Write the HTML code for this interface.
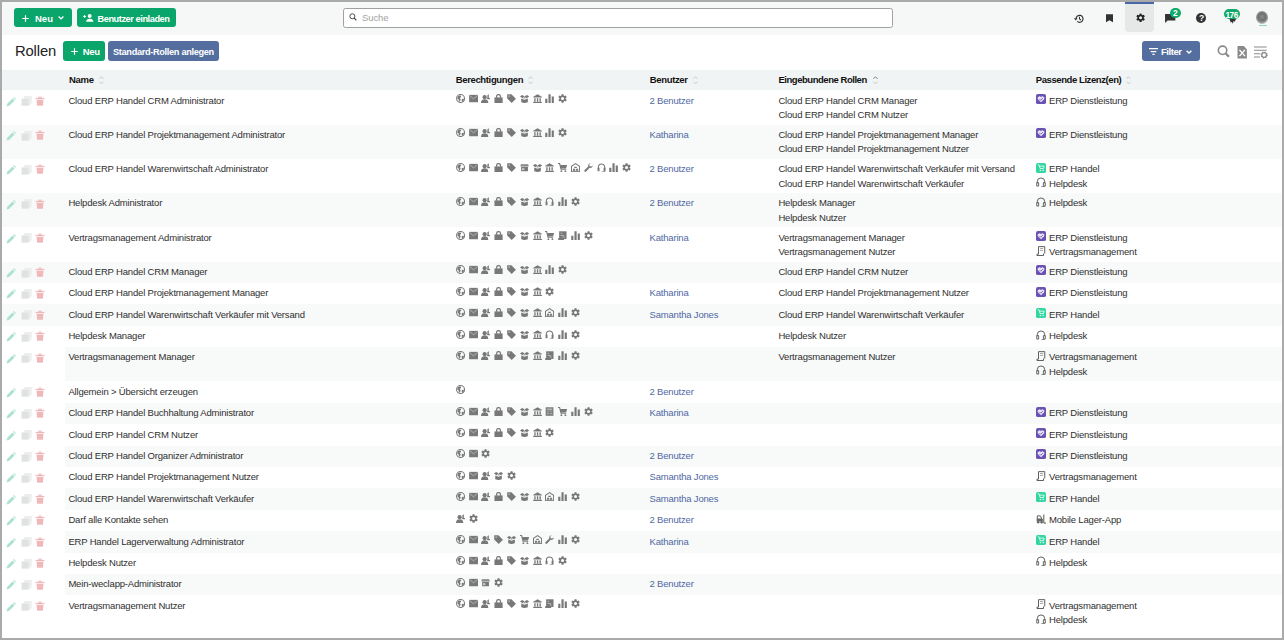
<!DOCTYPE html>
<html><head><meta charset="utf-8"><title>Rollen</title>
<style>
*{box-sizing:border-box;margin:0;padding:0}
html,body{width:1284px;height:640px;overflow:hidden;background:#fff;font-family:"Liberation Sans", sans-serif;}
#frame{position:absolute;left:0;top:0;width:1284px;height:640px;overflow:hidden;background:#fff}
#border{position:absolute;left:0;top:0;width:1284px;height:640px;border:2px solid #aaaaaa;pointer-events:none}
.abs{position:absolute}
.ic{position:absolute;display:block;overflow:visible}
.row{position:absolute;left:0;width:1284px}
.green{background:#0aa56a}
.blue{background:#546ea0}
</style></head><body>
<svg width="0" height="0" style="position:absolute"><defs><symbol id="i-globe" viewBox="0 0 16 16" fill="currentColor"><circle cx="8" cy="8" r="7" fill="none" stroke="currentColor" stroke-width="1.8"/><path d="M3.2 3.8L7.5 2.4 9.2 4.6 7 7 8.2 10 6.5 13.6 5 12.2 4.6 9.5 2.2 7.6z"/><path d="M10.2 8.8L14 8.4 13.4 11.8 10.8 14 10 11.2z"/></symbol><symbol id="i-mail" viewBox="0 0 16 16" fill="currentColor"><path d="M0.2 1.5h15.6v13H0.2z"/><path d="M0.8 2.5L8 8.5l7.2-6" fill="none" stroke="#fff" stroke-width="1.1" opacity=".7"/></symbol><symbol id="i-users" viewBox="0 0 16 16" fill="currentColor"><circle cx="6.4" cy="5.6" r="3.7"/><path d="M0 16c0-4.6 2.6-6.6 6.4-6.6s6.4 2 6.4 6.6z"/><path d="M11.2 2.2l2.6-1.8V9h-2.6z"/><path d="M11.2 7h4.6v2.2h-4.6z"/></symbol><symbol id="i-bag" viewBox="0 0 16 16" fill="currentColor"><path d="M0.8 6h14.4v10H0.8z"/><path d="M4.6 6.5V4.4a3.4 3.4 0 0 1 6.8 0v2.1" fill="none" stroke="currentColor" stroke-width="2.2"/></symbol><symbol id="i-tag" viewBox="0 0 16 16" fill="currentColor"><path d="M0.3 0.3h7.4l8 8-7.4 7.4-8-8z"/><circle cx="3.8" cy="3.8" r="1.4" fill="#fff" opacity=".5"/></symbol><symbol id="i-box" viewBox="0 0 16 16" fill="currentColor"><path d="M2.2 8l5.8 2.2L13.8 8v6.6L8 16l-5.8-1.4z"/><path d="M0 4.6L3.6 1.6 8 4 4.4 7.4z"/><path d="M16 4.6l-3.6-3L8 4l3.6 3.4z"/><path d="M8 4.5L5 7.2 8 8.4l3-1.2z" opacity=".6"/></symbol><symbol id="i-bank" viewBox="0 0 16 16" fill="currentColor"><path d="M0.5 4.8L8 0.3l7.5 4.5v1.5H0.5z"/><path d="M2.2 7.5h2.4v6H2.2zM6.8 7.5h2.4v6H6.8zM11.4 7.5h2.4v6h-2.4z"/><path d="M0.3 13.8h15.4V16H0.3z"/></symbol><symbol id="i-store" viewBox="0 0 16 16" fill="currentColor"><path d="M1.5 2h13l0.8 4.2H0.7z"/><path d="M1.2 4h13.6" stroke="#fff" stroke-width="0.7" opacity=".5"/><path d="M2 7h12v7.5H2z"/><path d="M3.5 9h4.2v3.6H3.5z" fill="#fff" opacity=".6"/></symbol><symbol id="i-cart" viewBox="0 0 16 16" fill="currentColor"><path d="M0 0.8h2.8l2.5 10.2h9" fill="none" stroke="currentColor" stroke-width="2"/><path d="M3.5 3.5h12.5l-1.8 6H5z"/><circle cx="6" cy="14.3" r="1.7"/><circle cx="13" cy="14.3" r="1.7"/></symbol><symbol id="i-warehouse" viewBox="0 0 16 16" fill="currentColor"><path d="M0.9 15.5V5.8L8 1.2l7.1 4.6v9.7z" fill="none" stroke="currentColor" stroke-width="1.8"/><path d="M5.8 6.5h4.4v2.2H5.8zM3.5 10h3.8v3.5H3.5zM8.7 10h3.8v3.5H8.7z"/><path d="M2.5 14.5h11" stroke="currentColor" stroke-width="1.2"/></symbol><symbol id="i-wrench" viewBox="0 0 16 16" fill="currentColor"><path d="M15.5 4.5a4.3 4.3 0 0 1-5.6 4L3.8 15a1.9 1.9 0 0 1-2.7-2.7L7.5 6.1A4.3 4.3 0 0 1 11.6 0.5L9.3 2.8l0.6 2.7 2.7 0.6z"/></symbol><symbol id="i-headset" viewBox="0 0 16 16" fill="currentColor"><path d="M2.4 10V7.4a5.6 5.6 0 0 1 11.2 0V10" fill="none" stroke="currentColor" stroke-width="1.9"/><path d="M1 8.5h3.4v6.2H1zM11.6 8.5H15v6.2h-3.4z"/><path d="M13.6 14v1.5H8.2" fill="none" stroke="currentColor" stroke-width="1.3"/></symbol><symbol id="i-chart" viewBox="0 0 16 16" fill="currentColor"><path d="M0.4 8.2h3.8V16H0.4zM6.1 0.5h3.8V16H6.1zM11.8 4.3h3.8V16h-3.8z"/></symbol><symbol id="i-gear" viewBox="0 0 16 16" fill="currentColor"><path fill-rule="evenodd" d="M6.08 2.74L6.25 0.40L9.75 0.40L9.92 2.74L11.60 3.71L13.70 2.68L15.46 5.72L13.51 7.03L13.51 8.97L15.46 10.28L13.70 13.32L11.60 12.29L9.92 13.26L9.75 15.60L6.25 15.60L6.08 13.26L4.40 12.29L2.30 13.32L0.54 10.28L2.49 8.97L2.49 7.03L0.54 5.72L2.30 2.68L4.40 3.71ZM5.3 8a2.7 2.7 0 1 0 5.4 0a2.7 2.7 0 1 0 -5.4 0Z"/></symbol><symbol id="i-calc" viewBox="0 0 16 16" fill="currentColor"><path d="M1.2 0.5h13.6v15H1.2z"/><path d="M3.2 2.6h9.6v3H3.2zM3.2 7.8h4.2v1.6H3.2zM8.6 7.8h4.2v1.6H8.6zM3.2 11.2h4.2v1.6H3.2zM8.6 11.2h4.2v1.6H8.6z" fill="#fff" opacity=".45"/></symbol><symbol id="i-doc" viewBox="0 0 16 16" fill="currentColor"><path d="M2 0.5h13v13.5H2z"/><path d="M0.3 12.5h10.5v3.3H0.3z"/><path d="M4.5 3h3v2h-3zM4.5 7h6v1.6h-6zM8 9.8h4v1.5H8z" fill="#fff" opacity=".45"/></symbol>
<symbol id="a-pen" viewBox="0 0 16 16"><path d="M1 15l1-4.2L10.5 2.3l3.2 3.2L5.2 14z" fill="#ace2cd"/><path d="M11.5 1.3l1.2-1.2 3.2 3.2-1.2 1.2z" fill="#ace2cd"/></symbol>
<symbol id="a-copy" viewBox="0 0 16 16"><path d="M4.5 1.5h11v10.5l-4 3.5V5h-7z" fill="#eceeee"/><path d="M0.8 5h10.5v10.5H0.8z" fill="#e0e2e2"/></symbol>
<symbol id="a-trash" viewBox="0 0 16 16"><path d="M1 3h14v2H1z" fill="#f0b8b8"/><path d="M5.5 1h5v2h-5z" fill="#f0b8b8"/><path d="M2.5 6h11l-0.8 9.5H3.3z" fill="#f0b8b8"/></symbol>
<symbol id="lic-dl" viewBox="0 0 16 16"><rect x="0" y="0" width="16" height="16" rx="3" fill="#6a52b3"/><path d="M8 13L3 8.2a2.6 2.6 0 0 1 5-3 2.6 2.6 0 0 1 5 3z" fill="#e8e4f6"/><path d="M5.5 8l2 2 3.5-3.5" fill="none" stroke="#6a52b3" stroke-width="1.3"/></symbol>
<symbol id="lic-handel" viewBox="0 0 16 16"><rect x="0" y="0" width="16" height="16" rx="3" fill="#33d6a2"/><path d="M3 3h2l1.5 6h5.5l1-4H5.5" fill="none" stroke="#e6fbf3" stroke-width="1.4"/><circle cx="7" cy="12" r="1.2" fill="#e6fbf3"/><circle cx="11.5" cy="12" r="1.2" fill="#e6fbf3"/></symbol>
<symbol id="lic-helpdesk" viewBox="0 0 16 16"><path d="M2 10V7.5a6 6 0 0 1 12 0V10" fill="none" stroke="#555" stroke-width="1.5"/><path d="M1.2 9h3v5.5h-3zM11.8 9h3v5.5h-3z" fill="none" stroke="#555" stroke-width="1.4"/><path d="M13.3 14.5v1H8.5" fill="none" stroke="#555" stroke-width="1.2"/></symbol>
<symbol id="lic-vm" viewBox="0 0 16 16"><path d="M4 1h10v11" fill="none" stroke="#555" stroke-width="1.5"/><path d="M4 1v12H1.5v2.2h10.5V12" fill="none" stroke="#555" stroke-width="1.5"/><path d="M6.5 4h5M6.5 7h5" stroke="#888" stroke-width="1.2"/></symbol>
<symbol id="lic-mobile" viewBox="0 0 16 16"><path d="M2 8V3h5l2.5 5z" fill="none" stroke="#555" stroke-width="1.5"/><path d="M1 8h10v4H1z" fill="#666"/><circle cx="3.5" cy="13" r="2" fill="#666"/><circle cx="9" cy="13" r="2" fill="#666"/><path d="M12.5 1v13.5H16" fill="none" stroke="#555" stroke-width="1.6"/></symbol>
</defs></svg>
<div id="frame">
<div class="abs" style="left:0;top:0;width:1284px;height:35px;background:#f6f7f7"></div><div class="abs green" style="left:14px;top:8px;width:58.3px;height:19px;border-radius:3px"></div><svg class="ic" style="left:22.2px;top:15.0px;width:7px;height:7px;" viewBox="0 0 14 14"><path d="M7 0.5v13M0.5 7h13" stroke="#fff" stroke-width="2.4"/></svg><div class="abs" style="left:35px;top:13.00px;font-size:9.5px;line-height:11.88px;font-weight:700;color:#ffffff;letter-spacing:0px;white-space:nowrap;">Neu</div><svg class="ic" style="left:58px;top:16px;width:6px;height:3.5px;" viewBox="0 0 12 7"><path d="M1.2 1.2l4.8 4.6 4.8-4.6" fill="none" stroke="#fff" stroke-width="2.8"/></svg><div class="abs green" style="left:76.5px;top:8px;width:99.7px;height:19px;border-radius:3px"></div><svg class="ic" style="left:82.5px;top:14.0px;width:11px;height:7.8px;" viewBox="0 0 22 16"><path d="M0 5h6M3 2v6" stroke="#fff" stroke-width="2"/><circle cx="13.5" cy="4" r="4" fill="#fff"/><path d="M6 16c0-5 3.5-6.5 7.5-6.5S21 11 21 16z" fill="#fff"/></svg><div class="abs" style="left:97.5px;top:14.00px;font-size:9.2px;line-height:11.5px;font-weight:700;color:#ffffff;letter-spacing:-0.42px;white-space:nowrap;">Benutzer einladen</div><div class="abs" style="left:343px;top:7.8px;width:550px;height:19.8px;border:1px solid #a0a0a0;border-radius:2.5px;background:#fff"></div><svg class="ic" style="left:349px;top:13.2px;width:8.2px;height:8px;" viewBox="0 0 16 16"><circle cx="6.5" cy="6.5" r="5" fill="none" stroke="#444" stroke-width="1.9"/><path d="M10.2 10.2l4.3 4.3" stroke="#444" stroke-width="2.3"/></svg><div class="abs" style="left:362px;top:12.00px;font-size:9.5px;line-height:11.88px;font-weight:400;color:#a2a2a2;letter-spacing:-0.1px;white-space:nowrap;">Suche</div><div class="abs" style="left:1125.4px;top:2px;width:29px;height:30px;background:#e6e8e8;border-radius:0 0 4px 4px;border-top:2px solid #4a68a8"></div><svg class="ic" style="left:1074px;top:13.6px;width:10.2px;height:9.6px;" viewBox="0 0 16 15"><path d="M3.2 7.5A5.5 5.5 0 1 1 5 11.6" fill="none" stroke="#333" stroke-width="1.8"/><path d="M0 6.5h5.6L2.8 10z" fill="#333"/><path d="M8.6 4.2v3.6l2.4 1.6" fill="none" stroke="#333" stroke-width="1.6"/></svg><svg class="ic" style="left:1106px;top:13.9px;width:7px;height:8.3px;" viewBox="0 0 14 16"><path d="M0 0h14v16l-7-4-7 4z" fill="#333"/></svg><svg class="ic" style="left:1135.5px;top:13.2px;width:9.2px;height:9.5px;" viewBox="0 0 16 16"><use href="#i-gear" style="color:#222"/></svg><svg class="ic" style="left:1165px;top:13.5px;width:10.4px;height:9px;" viewBox="0 0 16 14"><path d="M0 0h16v10H4l-4 4z" fill="#333"/></svg><div class="abs" style="left:1170.4px;top:7.7px;width:10.4px;height:10.4px;border-radius:50%;background:#11a86b"></div><div class="abs" style="left:1172.9px;top:8.00px;font-size:8.5px;line-height:10.62px;font-weight:700;color:#ffffff;letter-spacing:0px;white-space:nowrap;">2</div><div class="abs" style="left:1196px;top:12.7px;width:10.4px;height:10.4px;border-radius:50%;background:#333"></div><div class="abs" style="left:1198.9px;top:13.00px;font-size:8.6px;line-height:10.75px;font-weight:700;color:#ffffff;letter-spacing:0px;white-space:nowrap;">?</div><svg class="ic" style="left:1228.5px;top:18.5px;width:7.5px;height:4.8px;" viewBox="0 0 16 10"><path d="M1 0h14l-3 6-2-2-2 6-2-4-2 2z" fill="#333"/></svg><div class="abs" style="left:1223.6px;top:9px;width:16.8px;height:10.4px;border-radius:5.2px;background:#11a86b"></div><div class="abs" style="left:1225.5px;top:10.00px;font-size:8.3px;line-height:10.38px;font-weight:700;color:#ffffff;letter-spacing:-0.5px;white-space:nowrap;">176</div><div class="abs" style="left:1256.3px;top:10.9px;width:12.2px;height:13.5px;border-radius:50%;background:radial-gradient(circle at 50% 45%, #8c8c8c 0, #6f6f6f 40%, #9c9c9c 62%, #d9d9d9 85%, #f2f2f2 100%)"></div><div class="abs" style="left:1258.5px;top:24.5px;width:8px;height:1px;background:#8fd6b6;border-radius:1px"></div>
<div class="abs" style="left:15px;top:42.00px;font-size:14.8px;line-height:18.5px;font-weight:400;color:#222;letter-spacing:-0.15px;white-space:nowrap;">Rollen</div><div class="abs green" style="left:63px;top:41.3px;width:42px;height:19.9px;border-radius:3px"></div><svg class="ic" style="left:70.8px;top:48.4px;width:7px;height:7px;" viewBox="0 0 14 14"><path d="M7 0.5v13M0.5 7h13" stroke="#fff" stroke-width="2.4"/></svg><div class="abs" style="left:82.7px;top:46.00px;font-size:9.5px;line-height:11.88px;font-weight:700;color:#ffffff;letter-spacing:-0.3px;white-space:nowrap;">Neu</div><div class="abs blue" style="left:107.7px;top:41.2px;width:111.3px;height:20px;border-radius:3px"></div><div class="abs" style="left:113px;top:47.00px;font-size:9.2px;line-height:11.5px;font-weight:700;color:#ffffff;letter-spacing:-0.32px;white-space:nowrap;">Standard-Rollen anlegen</div><div class="abs blue" style="left:1141.7px;top:41.2px;width:58.3px;height:19.8px;border-radius:3px"></div><svg class="ic" style="left:1149px;top:47.6px;width:9px;height:7.6px;" viewBox="0 0 16 13"><path d="M0 1h16M3 6h10M6 11h4" stroke="#fff" stroke-width="2.2"/></svg><div class="abs" style="left:1161px;top:46.00px;font-size:9.5px;line-height:11.88px;font-weight:700;color:#ffffff;letter-spacing:-0.45px;white-space:nowrap;">Filter</div><svg class="ic" style="left:1186px;top:49.8px;width:6px;height:3.6px;" viewBox="0 0 12 7"><path d="M1.2 1.2l4.8 4.6 4.8-4.6" fill="none" stroke="#fff" stroke-width="2.8"/></svg><svg class="ic" style="left:1217.4px;top:45.3px;width:13px;height:12.5px;" viewBox="0 0 16 16"><circle cx="6.8" cy="6.8" r="5.4" fill="none" stroke="#888" stroke-width="2"/><path d="M10.8 10.8l4.2 4.2" stroke="#888" stroke-width="2.8"/></svg><svg class="ic" style="left:1236.9px;top:45.5px;width:10.4px;height:12.5px;" viewBox="0 0 12 16"><path d="M0 0h8l4 4v12H0z" fill="#8a8a8a"/><path d="M2.5 5l7 8M9.5 5l-7 8" stroke="#fff" stroke-width="1.8"/></svg><svg class="ic" style="left:1254.3px;top:45.9px;width:13.5px;height:12px;" viewBox="0 0 16 14"><path d="M0 1h15M0 5h15M0 9h7M0 13h7" stroke="#8a8a8a" stroke-width="1.2"/><circle cx="12" cy="10.5" r="2.8" fill="#fff" stroke="#8a8a8a" stroke-width="1.5"/><circle cx="12" cy="10.5" r="3.6" fill="none" stroke="#8a8a8a" stroke-width="1.3" stroke-dasharray="1.4 1.43"/></svg>
<div class="abs" style="left:0;top:70px;width:1284px;height:20.3px;background:#f1f4f5"></div><div class="abs" style="left:69px;top:74.00px;font-size:9.5px;line-height:11.88px;font-weight:700;color:#111;letter-spacing:-0.3px;white-space:nowrap;">Name</div><svg class="ic" style="left:99.4px;top:76px;width:5px;height:8.5px" viewBox="0 0 10 17"><path d="M1 5.5L5 1.5l4 4" fill="none" stroke="#c6c9ca" stroke-width="2"/><path d="M1 11.5l4 4 4-4" fill="none" stroke="#c6c9ca" stroke-width="2"/></svg><div class="abs" style="left:455.7px;top:74.00px;font-size:9.5px;line-height:11.88px;font-weight:700;color:#111;letter-spacing:-0.35px;white-space:nowrap;">Berechtigungen</div><svg class="ic" style="left:527.9px;top:76px;width:5px;height:8.5px" viewBox="0 0 10 17"><path d="M1 5.5L5 1.5l4 4" fill="none" stroke="#c6c9ca" stroke-width="2"/><path d="M1 11.5l4 4 4-4" fill="none" stroke="#c6c9ca" stroke-width="2"/></svg><div class="abs" style="left:649.8px;top:74.00px;font-size:9.5px;line-height:11.88px;font-weight:700;color:#111;letter-spacing:-0.35px;white-space:nowrap;">Benutzer</div><svg class="ic" style="left:692.5px;top:76px;width:5px;height:8.5px" viewBox="0 0 10 17"><path d="M1 5.5L5 1.5l4 4" fill="none" stroke="#c6c9ca" stroke-width="2"/><path d="M1 11.5l4 4 4-4" fill="none" stroke="#c6c9ca" stroke-width="2"/></svg><div class="abs" style="left:778.4px;top:74.00px;font-size:9.5px;line-height:11.88px;font-weight:700;color:#111;letter-spacing:-0.46px;white-space:nowrap;">Eingebundene Rollen</div><svg class="ic" style="left:872.8px;top:76px;width:5px;height:8.5px" viewBox="0 0 10 17"><path d="M1 5.5L5 1.5l4 4" fill="none" stroke="#7a7a7a" stroke-width="2"/><path d="M1 11.5l4 4 4-4" fill="none" stroke="#c6c9ca" stroke-width="2"/></svg><div class="abs" style="left:1035.8px;top:74.00px;font-size:9.5px;line-height:11.88px;font-weight:700;color:#111;letter-spacing:-0.42px;white-space:nowrap;">Passende Lizenz(en)</div><svg class="ic" style="left:1126px;top:76px;width:5px;height:8.5px" viewBox="0 0 10 17"><path d="M1 5.5L5 1.5l4 4" fill="none" stroke="#c6c9ca" stroke-width="2"/><path d="M1 11.5l4 4 4-4" fill="none" stroke="#c6c9ca" stroke-width="2"/></svg>
<div class="row" style="top:90.30px;height:34.25px;background:#fff"></div>
<svg class="ic" style="left:5.8px;top:96.80px;width:10px;height:10px" viewBox="0 0 16 16"><use href="#a-pen"/></svg>
<svg class="ic" style="left:20.5px;top:95.40px;width:11px;height:11px" viewBox="0 0 16 16"><use href="#a-copy"/></svg>
<svg class="ic" style="left:35.4px;top:96.00px;width:10px;height:10px" viewBox="0 0 16 16"><use href="#a-trash"/></svg>
<div class="abs" style="left:68.4px;top:95.00px;font-size:9.5px;line-height:11.88px;font-weight:400;color:#2f2f2f;letter-spacing:-0.18px;white-space:nowrap;">Cloud ERP Handel CRM Administrator</div>
<svg class="ic" style="left:455.7px;top:94.1px;width:9.1px;height:9.1px;color:#787878" viewBox="0 0 16 16"><use href="#i-globe"/></svg>
<svg class="ic" style="left:468.5px;top:94.1px;width:9.1px;height:9.1px;color:#787878" viewBox="0 0 16 16"><use href="#i-mail"/></svg>
<svg class="ic" style="left:481.3px;top:94.1px;width:9.1px;height:9.1px;color:#787878" viewBox="0 0 16 16"><use href="#i-users"/></svg>
<svg class="ic" style="left:494.1px;top:94.1px;width:9.1px;height:9.1px;color:#787878" viewBox="0 0 16 16"><use href="#i-bag"/></svg>
<svg class="ic" style="left:506.9px;top:94.1px;width:9.1px;height:9.1px;color:#787878" viewBox="0 0 16 16"><use href="#i-tag"/></svg>
<svg class="ic" style="left:519.7px;top:94.1px;width:9.1px;height:9.1px;color:#787878" viewBox="0 0 16 16"><use href="#i-box"/></svg>
<svg class="ic" style="left:532.5px;top:94.1px;width:9.1px;height:9.1px;color:#787878" viewBox="0 0 16 16"><use href="#i-bank"/></svg>
<svg class="ic" style="left:545.3px;top:94.1px;width:9.1px;height:9.1px;color:#787878" viewBox="0 0 16 16"><use href="#i-chart"/></svg>
<svg class="ic" style="left:558.1px;top:94.1px;width:9.1px;height:9.1px;color:#787878" viewBox="0 0 16 16"><use href="#i-gear"/></svg>
<div class="abs" style="left:649.5px;top:95.00px;font-size:9.5px;line-height:11.88px;font-weight:400;color:#4f69a3;letter-spacing:-0.18px;white-space:nowrap;">2 Benutzer</div>
<div class="abs" style="left:778.4px;top:95.00px;font-size:9.5px;line-height:11.88px;font-weight:400;color:#2f2f2f;letter-spacing:-0.18px;white-space:nowrap;">Cloud ERP Handel CRM Manager</div>
<div class="abs" style="left:778.4px;top:109.00px;font-size:9.5px;line-height:11.88px;font-weight:400;color:#2f2f2f;letter-spacing:-0.18px;white-space:nowrap;">Cloud ERP Handel CRM Nutzer</div>
<svg class="ic" style="left:1036px;top:94.20px;width:10px;height:10px" viewBox="0 0 16 16"><use href="#lic-dl"/></svg>
<div class="abs" style="left:1049px;top:95.00px;font-size:9.5px;line-height:11.88px;font-weight:400;color:#2f2f2f;letter-spacing:-0.18px;white-space:nowrap;">ERP Dienstleistung</div>
<div class="row" style="top:124.54px;height:34.25px;background:#f8f9f9"></div>
<svg class="ic" style="left:5.8px;top:131.04px;width:10px;height:10px" viewBox="0 0 16 16"><use href="#a-pen"/></svg>
<svg class="ic" style="left:20.5px;top:129.64px;width:11px;height:11px" viewBox="0 0 16 16"><use href="#a-copy"/></svg>
<svg class="ic" style="left:35.4px;top:130.24px;width:10px;height:10px" viewBox="0 0 16 16"><use href="#a-trash"/></svg>
<div class="abs" style="left:68.4px;top:129.00px;font-size:9.5px;line-height:11.88px;font-weight:400;color:#2f2f2f;letter-spacing:-0.18px;white-space:nowrap;">Cloud ERP Handel Projektmanagement Administrator</div>
<svg class="ic" style="left:455.7px;top:128.34px;width:9.1px;height:9.1px;color:#787878" viewBox="0 0 16 16"><use href="#i-globe"/></svg>
<svg class="ic" style="left:468.5px;top:128.34px;width:9.1px;height:9.1px;color:#787878" viewBox="0 0 16 16"><use href="#i-mail"/></svg>
<svg class="ic" style="left:481.3px;top:128.34px;width:9.1px;height:9.1px;color:#787878" viewBox="0 0 16 16"><use href="#i-users"/></svg>
<svg class="ic" style="left:494.1px;top:128.34px;width:9.1px;height:9.1px;color:#787878" viewBox="0 0 16 16"><use href="#i-bag"/></svg>
<svg class="ic" style="left:506.9px;top:128.34px;width:9.1px;height:9.1px;color:#787878" viewBox="0 0 16 16"><use href="#i-tag"/></svg>
<svg class="ic" style="left:519.7px;top:128.34px;width:9.1px;height:9.1px;color:#787878" viewBox="0 0 16 16"><use href="#i-box"/></svg>
<svg class="ic" style="left:532.5px;top:128.34px;width:9.1px;height:9.1px;color:#787878" viewBox="0 0 16 16"><use href="#i-bank"/></svg>
<svg class="ic" style="left:545.3px;top:128.34px;width:9.1px;height:9.1px;color:#787878" viewBox="0 0 16 16"><use href="#i-chart"/></svg>
<svg class="ic" style="left:558.1px;top:128.34px;width:9.1px;height:9.1px;color:#787878" viewBox="0 0 16 16"><use href="#i-gear"/></svg>
<div class="abs" style="left:649.5px;top:129.00px;font-size:9.5px;line-height:11.88px;font-weight:400;color:#4f69a3;letter-spacing:-0.18px;white-space:nowrap;">Katharina</div>
<div class="abs" style="left:778.4px;top:129.00px;font-size:9.5px;line-height:11.88px;font-weight:400;color:#2f2f2f;letter-spacing:-0.18px;white-space:nowrap;">Cloud ERP Handel Projektmanagement Manager</div>
<div class="abs" style="left:778.4px;top:143.00px;font-size:9.5px;line-height:11.88px;font-weight:400;color:#2f2f2f;letter-spacing:-0.18px;white-space:nowrap;">Cloud ERP Handel Projektmanagement Nutzer</div>
<svg class="ic" style="left:1036px;top:128.44px;width:10px;height:10px" viewBox="0 0 16 16"><use href="#lic-dl"/></svg>
<div class="abs" style="left:1049px;top:129.00px;font-size:9.5px;line-height:11.88px;font-weight:400;color:#2f2f2f;letter-spacing:-0.18px;white-space:nowrap;">ERP Dienstleistung</div>
<div class="row" style="top:158.78px;height:34.25px;background:#fff"></div>
<svg class="ic" style="left:5.8px;top:165.28px;width:10px;height:10px" viewBox="0 0 16 16"><use href="#a-pen"/></svg>
<svg class="ic" style="left:20.5px;top:163.88px;width:11px;height:11px" viewBox="0 0 16 16"><use href="#a-copy"/></svg>
<svg class="ic" style="left:35.4px;top:164.48px;width:10px;height:10px" viewBox="0 0 16 16"><use href="#a-trash"/></svg>
<div class="abs" style="left:68.4px;top:163.00px;font-size:9.5px;line-height:11.88px;font-weight:400;color:#2f2f2f;letter-spacing:-0.18px;white-space:nowrap;">Cloud ERP Handel Warenwirtschaft Administrator</div>
<svg class="ic" style="left:455.7px;top:162.58px;width:9.1px;height:9.1px;color:#787878" viewBox="0 0 16 16"><use href="#i-globe"/></svg>
<svg class="ic" style="left:468.5px;top:162.58px;width:9.1px;height:9.1px;color:#787878" viewBox="0 0 16 16"><use href="#i-mail"/></svg>
<svg class="ic" style="left:481.3px;top:162.58px;width:9.1px;height:9.1px;color:#787878" viewBox="0 0 16 16"><use href="#i-users"/></svg>
<svg class="ic" style="left:494.1px;top:162.58px;width:9.1px;height:9.1px;color:#787878" viewBox="0 0 16 16"><use href="#i-bag"/></svg>
<svg class="ic" style="left:506.9px;top:162.58px;width:9.1px;height:9.1px;color:#787878" viewBox="0 0 16 16"><use href="#i-tag"/></svg>
<svg class="ic" style="left:519.7px;top:162.58px;width:9.1px;height:9.1px;color:#787878" viewBox="0 0 16 16"><use href="#i-store"/></svg>
<svg class="ic" style="left:532.5px;top:162.58px;width:9.1px;height:9.1px;color:#787878" viewBox="0 0 16 16"><use href="#i-box"/></svg>
<svg class="ic" style="left:545.3px;top:162.58px;width:9.1px;height:9.1px;color:#787878" viewBox="0 0 16 16"><use href="#i-bank"/></svg>
<svg class="ic" style="left:558.1px;top:162.58px;width:9.1px;height:9.1px;color:#787878" viewBox="0 0 16 16"><use href="#i-cart"/></svg>
<svg class="ic" style="left:570.9px;top:162.58px;width:9.1px;height:9.1px;color:#787878" viewBox="0 0 16 16"><use href="#i-warehouse"/></svg>
<svg class="ic" style="left:583.7px;top:162.58px;width:9.1px;height:9.1px;color:#787878" viewBox="0 0 16 16"><use href="#i-wrench"/></svg>
<svg class="ic" style="left:596.5px;top:162.58px;width:9.1px;height:9.1px;color:#787878" viewBox="0 0 16 16"><use href="#i-headset"/></svg>
<svg class="ic" style="left:609.3px;top:162.58px;width:9.1px;height:9.1px;color:#787878" viewBox="0 0 16 16"><use href="#i-chart"/></svg>
<svg class="ic" style="left:622.1px;top:162.58px;width:9.1px;height:9.1px;color:#787878" viewBox="0 0 16 16"><use href="#i-gear"/></svg>
<div class="abs" style="left:649.5px;top:163.00px;font-size:9.5px;line-height:11.88px;font-weight:400;color:#4f69a3;letter-spacing:-0.18px;white-space:nowrap;">2 Benutzer</div>
<div class="abs" style="left:778.4px;top:163.00px;font-size:9.5px;line-height:11.88px;font-weight:400;color:#2f2f2f;letter-spacing:-0.18px;white-space:nowrap;">Cloud ERP Handel Warenwirtschaft Verkäufer mit Versand</div>
<div class="abs" style="left:778.4px;top:178.00px;font-size:9.5px;line-height:11.88px;font-weight:400;color:#2f2f2f;letter-spacing:-0.18px;white-space:nowrap;">Cloud ERP Handel Warenwirtschaft Verkäufer</div>
<svg class="ic" style="left:1036px;top:162.68px;width:10px;height:10px" viewBox="0 0 16 16"><use href="#lic-handel"/></svg>
<div class="abs" style="left:1049px;top:163.00px;font-size:9.5px;line-height:11.88px;font-weight:400;color:#2f2f2f;letter-spacing:-0.18px;white-space:nowrap;">ERP Handel</div>
<svg class="ic" style="left:1036px;top:177.08px;width:10px;height:10px" viewBox="0 0 16 16"><use href="#lic-helpdesk"/></svg>
<div class="abs" style="left:1049px;top:178.00px;font-size:9.5px;line-height:11.88px;font-weight:400;color:#2f2f2f;letter-spacing:-0.18px;white-space:nowrap;">Helpdesk</div>
<div class="row" style="top:193.02px;height:34.25px;background:#f8f9f9"></div>
<svg class="ic" style="left:5.8px;top:199.52px;width:10px;height:10px" viewBox="0 0 16 16"><use href="#a-pen"/></svg>
<svg class="ic" style="left:20.5px;top:198.12px;width:11px;height:11px" viewBox="0 0 16 16"><use href="#a-copy"/></svg>
<svg class="ic" style="left:35.4px;top:198.72px;width:10px;height:10px" viewBox="0 0 16 16"><use href="#a-trash"/></svg>
<div class="abs" style="left:68.4px;top:197.00px;font-size:9.5px;line-height:11.88px;font-weight:400;color:#2f2f2f;letter-spacing:-0.18px;white-space:nowrap;">Helpdesk Administrator</div>
<svg class="ic" style="left:455.7px;top:196.82000000000002px;width:9.1px;height:9.1px;color:#787878" viewBox="0 0 16 16"><use href="#i-globe"/></svg>
<svg class="ic" style="left:468.5px;top:196.82000000000002px;width:9.1px;height:9.1px;color:#787878" viewBox="0 0 16 16"><use href="#i-mail"/></svg>
<svg class="ic" style="left:481.3px;top:196.82000000000002px;width:9.1px;height:9.1px;color:#787878" viewBox="0 0 16 16"><use href="#i-users"/></svg>
<svg class="ic" style="left:494.1px;top:196.82000000000002px;width:9.1px;height:9.1px;color:#787878" viewBox="0 0 16 16"><use href="#i-bag"/></svg>
<svg class="ic" style="left:506.9px;top:196.82000000000002px;width:9.1px;height:9.1px;color:#787878" viewBox="0 0 16 16"><use href="#i-tag"/></svg>
<svg class="ic" style="left:519.7px;top:196.82000000000002px;width:9.1px;height:9.1px;color:#787878" viewBox="0 0 16 16"><use href="#i-box"/></svg>
<svg class="ic" style="left:532.5px;top:196.82000000000002px;width:9.1px;height:9.1px;color:#787878" viewBox="0 0 16 16"><use href="#i-bank"/></svg>
<svg class="ic" style="left:545.3px;top:196.82000000000002px;width:9.1px;height:9.1px;color:#787878" viewBox="0 0 16 16"><use href="#i-headset"/></svg>
<svg class="ic" style="left:558.1px;top:196.82000000000002px;width:9.1px;height:9.1px;color:#787878" viewBox="0 0 16 16"><use href="#i-chart"/></svg>
<svg class="ic" style="left:570.9px;top:196.82000000000002px;width:9.1px;height:9.1px;color:#787878" viewBox="0 0 16 16"><use href="#i-gear"/></svg>
<div class="abs" style="left:649.5px;top:197.00px;font-size:9.5px;line-height:11.88px;font-weight:400;color:#4f69a3;letter-spacing:-0.18px;white-space:nowrap;">2 Benutzer</div>
<div class="abs" style="left:778.4px;top:197.00px;font-size:9.5px;line-height:11.88px;font-weight:400;color:#2f2f2f;letter-spacing:-0.18px;white-space:nowrap;">Helpdesk Manager</div>
<div class="abs" style="left:778.4px;top:212.00px;font-size:9.5px;line-height:11.88px;font-weight:400;color:#2f2f2f;letter-spacing:-0.18px;white-space:nowrap;">Helpdesk Nutzer</div>
<svg class="ic" style="left:1036px;top:196.92px;width:10px;height:10px" viewBox="0 0 16 16"><use href="#lic-helpdesk"/></svg>
<div class="abs" style="left:1049px;top:197.00px;font-size:9.5px;line-height:11.88px;font-weight:400;color:#2f2f2f;letter-spacing:-0.18px;white-space:nowrap;">Helpdesk</div>
<div class="row" style="top:227.26px;height:34.25px;background:#fff"></div>
<svg class="ic" style="left:5.8px;top:233.76px;width:10px;height:10px" viewBox="0 0 16 16"><use href="#a-pen"/></svg>
<svg class="ic" style="left:20.5px;top:232.36px;width:11px;height:11px" viewBox="0 0 16 16"><use href="#a-copy"/></svg>
<svg class="ic" style="left:35.4px;top:232.96px;width:10px;height:10px" viewBox="0 0 16 16"><use href="#a-trash"/></svg>
<div class="abs" style="left:68.4px;top:232.00px;font-size:9.5px;line-height:11.88px;font-weight:400;color:#2f2f2f;letter-spacing:-0.18px;white-space:nowrap;">Vertragsmanagement Administrator</div>
<svg class="ic" style="left:455.7px;top:231.06000000000003px;width:9.1px;height:9.1px;color:#787878" viewBox="0 0 16 16"><use href="#i-globe"/></svg>
<svg class="ic" style="left:468.5px;top:231.06000000000003px;width:9.1px;height:9.1px;color:#787878" viewBox="0 0 16 16"><use href="#i-mail"/></svg>
<svg class="ic" style="left:481.3px;top:231.06000000000003px;width:9.1px;height:9.1px;color:#787878" viewBox="0 0 16 16"><use href="#i-users"/></svg>
<svg class="ic" style="left:494.1px;top:231.06000000000003px;width:9.1px;height:9.1px;color:#787878" viewBox="0 0 16 16"><use href="#i-bag"/></svg>
<svg class="ic" style="left:506.9px;top:231.06000000000003px;width:9.1px;height:9.1px;color:#787878" viewBox="0 0 16 16"><use href="#i-tag"/></svg>
<svg class="ic" style="left:519.7px;top:231.06000000000003px;width:9.1px;height:9.1px;color:#787878" viewBox="0 0 16 16"><use href="#i-box"/></svg>
<svg class="ic" style="left:532.5px;top:231.06000000000003px;width:9.1px;height:9.1px;color:#787878" viewBox="0 0 16 16"><use href="#i-bank"/></svg>
<svg class="ic" style="left:545.3px;top:231.06000000000003px;width:9.1px;height:9.1px;color:#787878" viewBox="0 0 16 16"><use href="#i-cart"/></svg>
<svg class="ic" style="left:558.1px;top:231.06000000000003px;width:9.1px;height:9.1px;color:#787878" viewBox="0 0 16 16"><use href="#i-doc"/></svg>
<svg class="ic" style="left:570.9px;top:231.06000000000003px;width:9.1px;height:9.1px;color:#787878" viewBox="0 0 16 16"><use href="#i-chart"/></svg>
<svg class="ic" style="left:583.7px;top:231.06000000000003px;width:9.1px;height:9.1px;color:#787878" viewBox="0 0 16 16"><use href="#i-gear"/></svg>
<div class="abs" style="left:649.5px;top:232.00px;font-size:9.5px;line-height:11.88px;font-weight:400;color:#4f69a3;letter-spacing:-0.18px;white-space:nowrap;">Katharina</div>
<div class="abs" style="left:778.4px;top:232.00px;font-size:9.5px;line-height:11.88px;font-weight:400;color:#2f2f2f;letter-spacing:-0.18px;white-space:nowrap;">Vertragsmanagement Manager</div>
<div class="abs" style="left:778.4px;top:246.00px;font-size:9.5px;line-height:11.88px;font-weight:400;color:#2f2f2f;letter-spacing:-0.18px;white-space:nowrap;">Vertragsmanagement Nutzer</div>
<svg class="ic" style="left:1036px;top:231.16px;width:10px;height:10px" viewBox="0 0 16 16"><use href="#lic-dl"/></svg>
<div class="abs" style="left:1049px;top:232.00px;font-size:9.5px;line-height:11.88px;font-weight:400;color:#2f2f2f;letter-spacing:-0.18px;white-space:nowrap;">ERP Dienstleistung</div>
<svg class="ic" style="left:1036px;top:245.56px;width:10px;height:10px" viewBox="0 0 16 16"><use href="#lic-vm"/></svg>
<div class="abs" style="left:1049px;top:246.00px;font-size:9.5px;line-height:11.88px;font-weight:400;color:#2f2f2f;letter-spacing:-0.18px;white-space:nowrap;">Vertragsmanagement</div>
<div class="row" style="top:261.50px;height:21.41px;background:#f8f9f9"></div>
<svg class="ic" style="left:5.8px;top:268.00px;width:10px;height:10px" viewBox="0 0 16 16"><use href="#a-pen"/></svg>
<svg class="ic" style="left:20.5px;top:266.60px;width:11px;height:11px" viewBox="0 0 16 16"><use href="#a-copy"/></svg>
<svg class="ic" style="left:35.4px;top:267.20px;width:10px;height:10px" viewBox="0 0 16 16"><use href="#a-trash"/></svg>
<div class="abs" style="left:68.4px;top:266.00px;font-size:9.5px;line-height:11.88px;font-weight:400;color:#2f2f2f;letter-spacing:-0.18px;white-space:nowrap;">Cloud ERP Handel CRM Manager</div>
<svg class="ic" style="left:455.7px;top:265.3px;width:9.1px;height:9.1px;color:#787878" viewBox="0 0 16 16"><use href="#i-globe"/></svg>
<svg class="ic" style="left:468.5px;top:265.3px;width:9.1px;height:9.1px;color:#787878" viewBox="0 0 16 16"><use href="#i-mail"/></svg>
<svg class="ic" style="left:481.3px;top:265.3px;width:9.1px;height:9.1px;color:#787878" viewBox="0 0 16 16"><use href="#i-users"/></svg>
<svg class="ic" style="left:494.1px;top:265.3px;width:9.1px;height:9.1px;color:#787878" viewBox="0 0 16 16"><use href="#i-bag"/></svg>
<svg class="ic" style="left:506.9px;top:265.3px;width:9.1px;height:9.1px;color:#787878" viewBox="0 0 16 16"><use href="#i-tag"/></svg>
<svg class="ic" style="left:519.7px;top:265.3px;width:9.1px;height:9.1px;color:#787878" viewBox="0 0 16 16"><use href="#i-box"/></svg>
<svg class="ic" style="left:532.5px;top:265.3px;width:9.1px;height:9.1px;color:#787878" viewBox="0 0 16 16"><use href="#i-bank"/></svg>
<svg class="ic" style="left:545.3px;top:265.3px;width:9.1px;height:9.1px;color:#787878" viewBox="0 0 16 16"><use href="#i-chart"/></svg>
<svg class="ic" style="left:558.1px;top:265.3px;width:9.1px;height:9.1px;color:#787878" viewBox="0 0 16 16"><use href="#i-gear"/></svg>
<div class="abs" style="left:778.4px;top:266.00px;font-size:9.5px;line-height:11.88px;font-weight:400;color:#2f2f2f;letter-spacing:-0.18px;white-space:nowrap;">Cloud ERP Handel CRM Nutzer</div>
<svg class="ic" style="left:1036px;top:265.40px;width:10px;height:10px" viewBox="0 0 16 16"><use href="#lic-dl"/></svg>
<div class="abs" style="left:1049px;top:266.00px;font-size:9.5px;line-height:11.88px;font-weight:400;color:#2f2f2f;letter-spacing:-0.18px;white-space:nowrap;">ERP Dienstleistung</div>
<div class="row" style="top:282.90px;height:21.41px;background:#fff"></div>
<svg class="ic" style="left:5.8px;top:289.40px;width:10px;height:10px" viewBox="0 0 16 16"><use href="#a-pen"/></svg>
<svg class="ic" style="left:20.5px;top:288.00px;width:11px;height:11px" viewBox="0 0 16 16"><use href="#a-copy"/></svg>
<svg class="ic" style="left:35.4px;top:288.60px;width:10px;height:10px" viewBox="0 0 16 16"><use href="#a-trash"/></svg>
<div class="abs" style="left:68.4px;top:287.00px;font-size:9.5px;line-height:11.88px;font-weight:400;color:#2f2f2f;letter-spacing:-0.18px;white-space:nowrap;">Cloud ERP Handel Projektmanagement Manager</div>
<svg class="ic" style="left:455.7px;top:286.7px;width:9.1px;height:9.1px;color:#787878" viewBox="0 0 16 16"><use href="#i-globe"/></svg>
<svg class="ic" style="left:468.5px;top:286.7px;width:9.1px;height:9.1px;color:#787878" viewBox="0 0 16 16"><use href="#i-mail"/></svg>
<svg class="ic" style="left:481.3px;top:286.7px;width:9.1px;height:9.1px;color:#787878" viewBox="0 0 16 16"><use href="#i-users"/></svg>
<svg class="ic" style="left:494.1px;top:286.7px;width:9.1px;height:9.1px;color:#787878" viewBox="0 0 16 16"><use href="#i-bag"/></svg>
<svg class="ic" style="left:506.9px;top:286.7px;width:9.1px;height:9.1px;color:#787878" viewBox="0 0 16 16"><use href="#i-tag"/></svg>
<svg class="ic" style="left:519.7px;top:286.7px;width:9.1px;height:9.1px;color:#787878" viewBox="0 0 16 16"><use href="#i-box"/></svg>
<svg class="ic" style="left:532.5px;top:286.7px;width:9.1px;height:9.1px;color:#787878" viewBox="0 0 16 16"><use href="#i-bank"/></svg>
<svg class="ic" style="left:545.3px;top:286.7px;width:9.1px;height:9.1px;color:#787878" viewBox="0 0 16 16"><use href="#i-gear"/></svg>
<div class="abs" style="left:649.5px;top:287.00px;font-size:9.5px;line-height:11.88px;font-weight:400;color:#4f69a3;letter-spacing:-0.18px;white-space:nowrap;">Katharina</div>
<div class="abs" style="left:778.4px;top:287.00px;font-size:9.5px;line-height:11.88px;font-weight:400;color:#2f2f2f;letter-spacing:-0.18px;white-space:nowrap;">Cloud ERP Handel Projektmanagement Nutzer</div>
<svg class="ic" style="left:1036px;top:286.80px;width:10px;height:10px" viewBox="0 0 16 16"><use href="#lic-dl"/></svg>
<div class="abs" style="left:1049px;top:287.00px;font-size:9.5px;line-height:11.88px;font-weight:400;color:#2f2f2f;letter-spacing:-0.18px;white-space:nowrap;">ERP Dienstleistung</div>
<div class="row" style="top:304.30px;height:21.41px;background:#f8f9f9"></div>
<svg class="ic" style="left:5.8px;top:310.80px;width:10px;height:10px" viewBox="0 0 16 16"><use href="#a-pen"/></svg>
<svg class="ic" style="left:20.5px;top:309.40px;width:11px;height:11px" viewBox="0 0 16 16"><use href="#a-copy"/></svg>
<svg class="ic" style="left:35.4px;top:310.00px;width:10px;height:10px" viewBox="0 0 16 16"><use href="#a-trash"/></svg>
<div class="abs" style="left:68.4px;top:309.00px;font-size:9.5px;line-height:11.88px;font-weight:400;color:#2f2f2f;letter-spacing:-0.18px;white-space:nowrap;">Cloud ERP Handel Warenwirtschaft Verkäufer mit Versand</div>
<svg class="ic" style="left:455.7px;top:308.09999999999997px;width:9.1px;height:9.1px;color:#787878" viewBox="0 0 16 16"><use href="#i-globe"/></svg>
<svg class="ic" style="left:468.5px;top:308.09999999999997px;width:9.1px;height:9.1px;color:#787878" viewBox="0 0 16 16"><use href="#i-mail"/></svg>
<svg class="ic" style="left:481.3px;top:308.09999999999997px;width:9.1px;height:9.1px;color:#787878" viewBox="0 0 16 16"><use href="#i-users"/></svg>
<svg class="ic" style="left:494.1px;top:308.09999999999997px;width:9.1px;height:9.1px;color:#787878" viewBox="0 0 16 16"><use href="#i-bag"/></svg>
<svg class="ic" style="left:506.9px;top:308.09999999999997px;width:9.1px;height:9.1px;color:#787878" viewBox="0 0 16 16"><use href="#i-tag"/></svg>
<svg class="ic" style="left:519.7px;top:308.09999999999997px;width:9.1px;height:9.1px;color:#787878" viewBox="0 0 16 16"><use href="#i-box"/></svg>
<svg class="ic" style="left:532.5px;top:308.09999999999997px;width:9.1px;height:9.1px;color:#787878" viewBox="0 0 16 16"><use href="#i-bank"/></svg>
<svg class="ic" style="left:545.3px;top:308.09999999999997px;width:9.1px;height:9.1px;color:#787878" viewBox="0 0 16 16"><use href="#i-warehouse"/></svg>
<svg class="ic" style="left:558.1px;top:308.09999999999997px;width:9.1px;height:9.1px;color:#787878" viewBox="0 0 16 16"><use href="#i-chart"/></svg>
<svg class="ic" style="left:570.9px;top:308.09999999999997px;width:9.1px;height:9.1px;color:#787878" viewBox="0 0 16 16"><use href="#i-gear"/></svg>
<div class="abs" style="left:649.5px;top:309.00px;font-size:9.5px;line-height:11.88px;font-weight:400;color:#4f69a3;letter-spacing:-0.18px;white-space:nowrap;">Samantha Jones</div>
<div class="abs" style="left:778.4px;top:309.00px;font-size:9.5px;line-height:11.88px;font-weight:400;color:#2f2f2f;letter-spacing:-0.18px;white-space:nowrap;">Cloud ERP Handel Warenwirtschaft Verkäufer</div>
<svg class="ic" style="left:1036px;top:308.20px;width:10px;height:10px" viewBox="0 0 16 16"><use href="#lic-handel"/></svg>
<div class="abs" style="left:1049px;top:309.00px;font-size:9.5px;line-height:11.88px;font-weight:400;color:#2f2f2f;letter-spacing:-0.18px;white-space:nowrap;">ERP Handel</div>
<div class="row" style="top:325.70px;height:21.41px;background:#fff"></div>
<svg class="ic" style="left:5.8px;top:332.20px;width:10px;height:10px" viewBox="0 0 16 16"><use href="#a-pen"/></svg>
<svg class="ic" style="left:20.5px;top:330.80px;width:11px;height:11px" viewBox="0 0 16 16"><use href="#a-copy"/></svg>
<svg class="ic" style="left:35.4px;top:331.40px;width:10px;height:10px" viewBox="0 0 16 16"><use href="#a-trash"/></svg>
<div class="abs" style="left:68.4px;top:330.00px;font-size:9.5px;line-height:11.88px;font-weight:400;color:#2f2f2f;letter-spacing:-0.18px;white-space:nowrap;">Helpdesk Manager</div>
<svg class="ic" style="left:455.7px;top:329.49999999999994px;width:9.1px;height:9.1px;color:#787878" viewBox="0 0 16 16"><use href="#i-globe"/></svg>
<svg class="ic" style="left:468.5px;top:329.49999999999994px;width:9.1px;height:9.1px;color:#787878" viewBox="0 0 16 16"><use href="#i-mail"/></svg>
<svg class="ic" style="left:481.3px;top:329.49999999999994px;width:9.1px;height:9.1px;color:#787878" viewBox="0 0 16 16"><use href="#i-users"/></svg>
<svg class="ic" style="left:494.1px;top:329.49999999999994px;width:9.1px;height:9.1px;color:#787878" viewBox="0 0 16 16"><use href="#i-bag"/></svg>
<svg class="ic" style="left:506.9px;top:329.49999999999994px;width:9.1px;height:9.1px;color:#787878" viewBox="0 0 16 16"><use href="#i-tag"/></svg>
<svg class="ic" style="left:519.7px;top:329.49999999999994px;width:9.1px;height:9.1px;color:#787878" viewBox="0 0 16 16"><use href="#i-box"/></svg>
<svg class="ic" style="left:532.5px;top:329.49999999999994px;width:9.1px;height:9.1px;color:#787878" viewBox="0 0 16 16"><use href="#i-bank"/></svg>
<svg class="ic" style="left:545.3px;top:329.49999999999994px;width:9.1px;height:9.1px;color:#787878" viewBox="0 0 16 16"><use href="#i-headset"/></svg>
<svg class="ic" style="left:558.1px;top:329.49999999999994px;width:9.1px;height:9.1px;color:#787878" viewBox="0 0 16 16"><use href="#i-chart"/></svg>
<svg class="ic" style="left:570.9px;top:329.49999999999994px;width:9.1px;height:9.1px;color:#787878" viewBox="0 0 16 16"><use href="#i-gear"/></svg>
<div class="abs" style="left:778.4px;top:330.00px;font-size:9.5px;line-height:11.88px;font-weight:400;color:#2f2f2f;letter-spacing:-0.18px;white-space:nowrap;">Helpdesk Nutzer</div>
<svg class="ic" style="left:1036px;top:329.60px;width:10px;height:10px" viewBox="0 0 16 16"><use href="#lic-helpdesk"/></svg>
<div class="abs" style="left:1049px;top:330.00px;font-size:9.5px;line-height:11.88px;font-weight:400;color:#2f2f2f;letter-spacing:-0.18px;white-space:nowrap;">Helpdesk</div>
<div class="row" style="top:347.10px;height:34.25px;background:#f8f9f9"></div>
<div class="abs" style="left:0;top:347.10px;width:65px;height:34.25px;background:#fff"></div>
<svg class="ic" style="left:5.8px;top:353.60px;width:10px;height:10px" viewBox="0 0 16 16"><use href="#a-pen"/></svg>
<svg class="ic" style="left:20.5px;top:352.20px;width:11px;height:11px" viewBox="0 0 16 16"><use href="#a-copy"/></svg>
<svg class="ic" style="left:35.4px;top:352.80px;width:10px;height:10px" viewBox="0 0 16 16"><use href="#a-trash"/></svg>
<div class="abs" style="left:68.4px;top:351.00px;font-size:9.5px;line-height:11.88px;font-weight:400;color:#2f2f2f;letter-spacing:-0.18px;white-space:nowrap;">Vertragsmanagement Manager</div>
<svg class="ic" style="left:455.7px;top:350.8999999999999px;width:9.1px;height:9.1px;color:#787878" viewBox="0 0 16 16"><use href="#i-globe"/></svg>
<svg class="ic" style="left:468.5px;top:350.8999999999999px;width:9.1px;height:9.1px;color:#787878" viewBox="0 0 16 16"><use href="#i-mail"/></svg>
<svg class="ic" style="left:481.3px;top:350.8999999999999px;width:9.1px;height:9.1px;color:#787878" viewBox="0 0 16 16"><use href="#i-users"/></svg>
<svg class="ic" style="left:494.1px;top:350.8999999999999px;width:9.1px;height:9.1px;color:#787878" viewBox="0 0 16 16"><use href="#i-bag"/></svg>
<svg class="ic" style="left:506.9px;top:350.8999999999999px;width:9.1px;height:9.1px;color:#787878" viewBox="0 0 16 16"><use href="#i-tag"/></svg>
<svg class="ic" style="left:519.7px;top:350.8999999999999px;width:9.1px;height:9.1px;color:#787878" viewBox="0 0 16 16"><use href="#i-box"/></svg>
<svg class="ic" style="left:532.5px;top:350.8999999999999px;width:9.1px;height:9.1px;color:#787878" viewBox="0 0 16 16"><use href="#i-bank"/></svg>
<svg class="ic" style="left:545.3px;top:350.8999999999999px;width:9.1px;height:9.1px;color:#787878" viewBox="0 0 16 16"><use href="#i-doc"/></svg>
<svg class="ic" style="left:558.1px;top:350.8999999999999px;width:9.1px;height:9.1px;color:#787878" viewBox="0 0 16 16"><use href="#i-chart"/></svg>
<svg class="ic" style="left:570.9px;top:350.8999999999999px;width:9.1px;height:9.1px;color:#787878" viewBox="0 0 16 16"><use href="#i-gear"/></svg>
<div class="abs" style="left:778.4px;top:351.00px;font-size:9.5px;line-height:11.88px;font-weight:400;color:#2f2f2f;letter-spacing:-0.18px;white-space:nowrap;">Vertragsmanagement Nutzer</div>
<svg class="ic" style="left:1036px;top:351.00px;width:10px;height:10px" viewBox="0 0 16 16"><use href="#lic-vm"/></svg>
<div class="abs" style="left:1049px;top:351.00px;font-size:9.5px;line-height:11.88px;font-weight:400;color:#2f2f2f;letter-spacing:-0.18px;white-space:nowrap;">Vertragsmanagement</div>
<svg class="ic" style="left:1036px;top:365.40px;width:10px;height:10px" viewBox="0 0 16 16"><use href="#lic-helpdesk"/></svg>
<div class="abs" style="left:1049px;top:366.00px;font-size:9.5px;line-height:11.88px;font-weight:400;color:#2f2f2f;letter-spacing:-0.18px;white-space:nowrap;">Helpdesk</div>
<div class="row" style="top:381.34px;height:21.41px;background:#fff"></div>
<div class="abs" style="left:0;top:381.34px;width:65px;height:21.41px;background:#fff"></div>
<svg class="ic" style="left:5.8px;top:387.84px;width:10px;height:10px" viewBox="0 0 16 16"><use href="#a-pen"/></svg>
<svg class="ic" style="left:20.5px;top:386.44px;width:11px;height:11px" viewBox="0 0 16 16"><use href="#a-copy"/></svg>
<svg class="ic" style="left:35.4px;top:387.04px;width:10px;height:10px" viewBox="0 0 16 16"><use href="#a-trash"/></svg>
<div class="abs" style="left:68.4px;top:386.00px;font-size:9.5px;line-height:11.88px;font-weight:400;color:#2f2f2f;letter-spacing:-0.18px;white-space:nowrap;">Allgemein &gt; Übersicht erzeugen</div>
<svg class="ic" style="left:455.7px;top:385.13999999999993px;width:9.1px;height:9.1px;color:#787878" viewBox="0 0 16 16"><use href="#i-globe"/></svg>
<div class="abs" style="left:649.5px;top:386.00px;font-size:9.5px;line-height:11.88px;font-weight:400;color:#4f69a3;letter-spacing:-0.18px;white-space:nowrap;">2 Benutzer</div>
<div class="row" style="top:402.74px;height:21.41px;background:#f8f9f9"></div>
<div class="abs" style="left:0;top:402.74px;width:65px;height:21.41px;background:#fff"></div>
<svg class="ic" style="left:5.8px;top:409.24px;width:10px;height:10px" viewBox="0 0 16 16"><use href="#a-pen"/></svg>
<svg class="ic" style="left:20.5px;top:407.84px;width:11px;height:11px" viewBox="0 0 16 16"><use href="#a-copy"/></svg>
<svg class="ic" style="left:35.4px;top:408.44px;width:10px;height:10px" viewBox="0 0 16 16"><use href="#a-trash"/></svg>
<div class="abs" style="left:68.4px;top:407.00px;font-size:9.5px;line-height:11.88px;font-weight:400;color:#2f2f2f;letter-spacing:-0.18px;white-space:nowrap;">Cloud ERP Handel Buchhaltung Administrator</div>
<svg class="ic" style="left:455.7px;top:406.5399999999999px;width:9.1px;height:9.1px;color:#787878" viewBox="0 0 16 16"><use href="#i-globe"/></svg>
<svg class="ic" style="left:468.5px;top:406.5399999999999px;width:9.1px;height:9.1px;color:#787878" viewBox="0 0 16 16"><use href="#i-mail"/></svg>
<svg class="ic" style="left:481.3px;top:406.5399999999999px;width:9.1px;height:9.1px;color:#787878" viewBox="0 0 16 16"><use href="#i-users"/></svg>
<svg class="ic" style="left:494.1px;top:406.5399999999999px;width:9.1px;height:9.1px;color:#787878" viewBox="0 0 16 16"><use href="#i-bag"/></svg>
<svg class="ic" style="left:506.9px;top:406.5399999999999px;width:9.1px;height:9.1px;color:#787878" viewBox="0 0 16 16"><use href="#i-tag"/></svg>
<svg class="ic" style="left:519.7px;top:406.5399999999999px;width:9.1px;height:9.1px;color:#787878" viewBox="0 0 16 16"><use href="#i-box"/></svg>
<svg class="ic" style="left:532.5px;top:406.5399999999999px;width:9.1px;height:9.1px;color:#787878" viewBox="0 0 16 16"><use href="#i-bank"/></svg>
<svg class="ic" style="left:545.3px;top:406.5399999999999px;width:9.1px;height:9.1px;color:#787878" viewBox="0 0 16 16"><use href="#i-calc"/></svg>
<svg class="ic" style="left:558.1px;top:406.5399999999999px;width:9.1px;height:9.1px;color:#787878" viewBox="0 0 16 16"><use href="#i-cart"/></svg>
<svg class="ic" style="left:570.9px;top:406.5399999999999px;width:9.1px;height:9.1px;color:#787878" viewBox="0 0 16 16"><use href="#i-chart"/></svg>
<svg class="ic" style="left:583.7px;top:406.5399999999999px;width:9.1px;height:9.1px;color:#787878" viewBox="0 0 16 16"><use href="#i-gear"/></svg>
<div class="abs" style="left:649.5px;top:407.00px;font-size:9.5px;line-height:11.88px;font-weight:400;color:#4f69a3;letter-spacing:-0.18px;white-space:nowrap;">Katharina</div>
<svg class="ic" style="left:1036px;top:406.64px;width:10px;height:10px" viewBox="0 0 16 16"><use href="#lic-dl"/></svg>
<div class="abs" style="left:1049px;top:407.00px;font-size:9.5px;line-height:11.88px;font-weight:400;color:#2f2f2f;letter-spacing:-0.18px;white-space:nowrap;">ERP Dienstleistung</div>
<div class="row" style="top:424.14px;height:21.41px;background:#fff"></div>
<div class="abs" style="left:0;top:424.14px;width:65px;height:21.41px;background:#fff"></div>
<svg class="ic" style="left:5.8px;top:430.64px;width:10px;height:10px" viewBox="0 0 16 16"><use href="#a-pen"/></svg>
<svg class="ic" style="left:20.5px;top:429.24px;width:11px;height:11px" viewBox="0 0 16 16"><use href="#a-copy"/></svg>
<svg class="ic" style="left:35.4px;top:429.84px;width:10px;height:10px" viewBox="0 0 16 16"><use href="#a-trash"/></svg>
<div class="abs" style="left:68.4px;top:429.00px;font-size:9.5px;line-height:11.88px;font-weight:400;color:#2f2f2f;letter-spacing:-0.18px;white-space:nowrap;">Cloud ERP Handel CRM Nutzer</div>
<svg class="ic" style="left:455.7px;top:427.9399999999999px;width:9.1px;height:9.1px;color:#787878" viewBox="0 0 16 16"><use href="#i-globe"/></svg>
<svg class="ic" style="left:468.5px;top:427.9399999999999px;width:9.1px;height:9.1px;color:#787878" viewBox="0 0 16 16"><use href="#i-mail"/></svg>
<svg class="ic" style="left:481.3px;top:427.9399999999999px;width:9.1px;height:9.1px;color:#787878" viewBox="0 0 16 16"><use href="#i-users"/></svg>
<svg class="ic" style="left:494.1px;top:427.9399999999999px;width:9.1px;height:9.1px;color:#787878" viewBox="0 0 16 16"><use href="#i-bag"/></svg>
<svg class="ic" style="left:506.9px;top:427.9399999999999px;width:9.1px;height:9.1px;color:#787878" viewBox="0 0 16 16"><use href="#i-tag"/></svg>
<svg class="ic" style="left:519.7px;top:427.9399999999999px;width:9.1px;height:9.1px;color:#787878" viewBox="0 0 16 16"><use href="#i-box"/></svg>
<svg class="ic" style="left:532.5px;top:427.9399999999999px;width:9.1px;height:9.1px;color:#787878" viewBox="0 0 16 16"><use href="#i-bank"/></svg>
<svg class="ic" style="left:545.3px;top:427.9399999999999px;width:9.1px;height:9.1px;color:#787878" viewBox="0 0 16 16"><use href="#i-gear"/></svg>
<svg class="ic" style="left:1036px;top:428.04px;width:10px;height:10px" viewBox="0 0 16 16"><use href="#lic-dl"/></svg>
<div class="abs" style="left:1049px;top:429.00px;font-size:9.5px;line-height:11.88px;font-weight:400;color:#2f2f2f;letter-spacing:-0.18px;white-space:nowrap;">ERP Dienstleistung</div>
<div class="row" style="top:445.54px;height:21.41px;background:#f8f9f9"></div>
<div class="abs" style="left:0;top:445.54px;width:65px;height:21.41px;background:#fff"></div>
<svg class="ic" style="left:5.8px;top:452.04px;width:10px;height:10px" viewBox="0 0 16 16"><use href="#a-pen"/></svg>
<svg class="ic" style="left:20.5px;top:450.64px;width:11px;height:11px" viewBox="0 0 16 16"><use href="#a-copy"/></svg>
<svg class="ic" style="left:35.4px;top:451.24px;width:10px;height:10px" viewBox="0 0 16 16"><use href="#a-trash"/></svg>
<div class="abs" style="left:68.4px;top:450.00px;font-size:9.5px;line-height:11.88px;font-weight:400;color:#2f2f2f;letter-spacing:-0.18px;white-space:nowrap;">Cloud ERP Handel Organizer Administrator</div>
<svg class="ic" style="left:455.7px;top:449.33999999999986px;width:9.1px;height:9.1px;color:#787878" viewBox="0 0 16 16"><use href="#i-globe"/></svg>
<svg class="ic" style="left:468.5px;top:449.33999999999986px;width:9.1px;height:9.1px;color:#787878" viewBox="0 0 16 16"><use href="#i-mail"/></svg>
<svg class="ic" style="left:481.3px;top:449.33999999999986px;width:9.1px;height:9.1px;color:#787878" viewBox="0 0 16 16"><use href="#i-gear"/></svg>
<div class="abs" style="left:649.5px;top:450.00px;font-size:9.5px;line-height:11.88px;font-weight:400;color:#4f69a3;letter-spacing:-0.18px;white-space:nowrap;">2 Benutzer</div>
<svg class="ic" style="left:1036px;top:449.44px;width:10px;height:10px" viewBox="0 0 16 16"><use href="#lic-dl"/></svg>
<div class="abs" style="left:1049px;top:450.00px;font-size:9.5px;line-height:11.88px;font-weight:400;color:#2f2f2f;letter-spacing:-0.18px;white-space:nowrap;">ERP Dienstleistung</div>
<div class="row" style="top:466.94px;height:21.41px;background:#fff"></div>
<div class="abs" style="left:0;top:466.94px;width:65px;height:21.41px;background:#fff"></div>
<svg class="ic" style="left:5.8px;top:473.44px;width:10px;height:10px" viewBox="0 0 16 16"><use href="#a-pen"/></svg>
<svg class="ic" style="left:20.5px;top:472.04px;width:11px;height:11px" viewBox="0 0 16 16"><use href="#a-copy"/></svg>
<svg class="ic" style="left:35.4px;top:472.64px;width:10px;height:10px" viewBox="0 0 16 16"><use href="#a-trash"/></svg>
<div class="abs" style="left:68.4px;top:471.00px;font-size:9.5px;line-height:11.88px;font-weight:400;color:#2f2f2f;letter-spacing:-0.18px;white-space:nowrap;">Cloud ERP Handel Projektmanagement Nutzer</div>
<svg class="ic" style="left:455.7px;top:470.73999999999984px;width:9.1px;height:9.1px;color:#787878" viewBox="0 0 16 16"><use href="#i-globe"/></svg>
<svg class="ic" style="left:468.5px;top:470.73999999999984px;width:9.1px;height:9.1px;color:#787878" viewBox="0 0 16 16"><use href="#i-mail"/></svg>
<svg class="ic" style="left:481.3px;top:470.73999999999984px;width:9.1px;height:9.1px;color:#787878" viewBox="0 0 16 16"><use href="#i-users"/></svg>
<svg class="ic" style="left:494.1px;top:470.73999999999984px;width:9.1px;height:9.1px;color:#787878" viewBox="0 0 16 16"><use href="#i-box"/></svg>
<svg class="ic" style="left:506.9px;top:470.73999999999984px;width:9.1px;height:9.1px;color:#787878" viewBox="0 0 16 16"><use href="#i-gear"/></svg>
<div class="abs" style="left:649.5px;top:471.00px;font-size:9.5px;line-height:11.88px;font-weight:400;color:#4f69a3;letter-spacing:-0.18px;white-space:nowrap;">Samantha Jones</div>
<svg class="ic" style="left:1036px;top:470.84px;width:10px;height:10px" viewBox="0 0 16 16"><use href="#lic-vm"/></svg>
<div class="abs" style="left:1049px;top:471.00px;font-size:9.5px;line-height:11.88px;font-weight:400;color:#2f2f2f;letter-spacing:-0.18px;white-space:nowrap;">Vertragsmanagement</div>
<div class="row" style="top:488.34px;height:21.41px;background:#f8f9f9"></div>
<div class="abs" style="left:0;top:488.34px;width:65px;height:21.41px;background:#fff"></div>
<svg class="ic" style="left:5.8px;top:494.84px;width:10px;height:10px" viewBox="0 0 16 16"><use href="#a-pen"/></svg>
<svg class="ic" style="left:20.5px;top:493.44px;width:11px;height:11px" viewBox="0 0 16 16"><use href="#a-copy"/></svg>
<svg class="ic" style="left:35.4px;top:494.04px;width:10px;height:10px" viewBox="0 0 16 16"><use href="#a-trash"/></svg>
<div class="abs" style="left:68.4px;top:493.00px;font-size:9.5px;line-height:11.88px;font-weight:400;color:#2f2f2f;letter-spacing:-0.18px;white-space:nowrap;">Cloud ERP Handel Warenwirtschaft Verkäufer</div>
<svg class="ic" style="left:455.7px;top:492.1399999999998px;width:9.1px;height:9.1px;color:#787878" viewBox="0 0 16 16"><use href="#i-globe"/></svg>
<svg class="ic" style="left:468.5px;top:492.1399999999998px;width:9.1px;height:9.1px;color:#787878" viewBox="0 0 16 16"><use href="#i-mail"/></svg>
<svg class="ic" style="left:481.3px;top:492.1399999999998px;width:9.1px;height:9.1px;color:#787878" viewBox="0 0 16 16"><use href="#i-users"/></svg>
<svg class="ic" style="left:494.1px;top:492.1399999999998px;width:9.1px;height:9.1px;color:#787878" viewBox="0 0 16 16"><use href="#i-bag"/></svg>
<svg class="ic" style="left:506.9px;top:492.1399999999998px;width:9.1px;height:9.1px;color:#787878" viewBox="0 0 16 16"><use href="#i-tag"/></svg>
<svg class="ic" style="left:519.7px;top:492.1399999999998px;width:9.1px;height:9.1px;color:#787878" viewBox="0 0 16 16"><use href="#i-box"/></svg>
<svg class="ic" style="left:532.5px;top:492.1399999999998px;width:9.1px;height:9.1px;color:#787878" viewBox="0 0 16 16"><use href="#i-bank"/></svg>
<svg class="ic" style="left:545.3px;top:492.1399999999998px;width:9.1px;height:9.1px;color:#787878" viewBox="0 0 16 16"><use href="#i-warehouse"/></svg>
<svg class="ic" style="left:558.1px;top:492.1399999999998px;width:9.1px;height:9.1px;color:#787878" viewBox="0 0 16 16"><use href="#i-chart"/></svg>
<svg class="ic" style="left:570.9px;top:492.1399999999998px;width:9.1px;height:9.1px;color:#787878" viewBox="0 0 16 16"><use href="#i-gear"/></svg>
<div class="abs" style="left:649.5px;top:493.00px;font-size:9.5px;line-height:11.88px;font-weight:400;color:#4f69a3;letter-spacing:-0.18px;white-space:nowrap;">Samantha Jones</div>
<svg class="ic" style="left:1036px;top:492.24px;width:10px;height:10px" viewBox="0 0 16 16"><use href="#lic-handel"/></svg>
<div class="abs" style="left:1049px;top:493.00px;font-size:9.5px;line-height:11.88px;font-weight:400;color:#2f2f2f;letter-spacing:-0.18px;white-space:nowrap;">ERP Handel</div>
<div class="row" style="top:509.74px;height:21.41px;background:#fff"></div>
<div class="abs" style="left:0;top:509.74px;width:65px;height:21.41px;background:#fff"></div>
<svg class="ic" style="left:5.8px;top:516.24px;width:10px;height:10px" viewBox="0 0 16 16"><use href="#a-pen"/></svg>
<svg class="ic" style="left:20.5px;top:514.84px;width:11px;height:11px" viewBox="0 0 16 16"><use href="#a-copy"/></svg>
<svg class="ic" style="left:35.4px;top:515.44px;width:10px;height:10px" viewBox="0 0 16 16"><use href="#a-trash"/></svg>
<div class="abs" style="left:68.4px;top:514.00px;font-size:9.5px;line-height:11.88px;font-weight:400;color:#2f2f2f;letter-spacing:-0.18px;white-space:nowrap;">Darf alle Kontakte sehen</div>
<svg class="ic" style="left:455.7px;top:513.5399999999997px;width:9.1px;height:9.1px;color:#787878" viewBox="0 0 16 16"><use href="#i-users"/></svg>
<svg class="ic" style="left:468.5px;top:513.5399999999997px;width:9.1px;height:9.1px;color:#787878" viewBox="0 0 16 16"><use href="#i-gear"/></svg>
<div class="abs" style="left:649.5px;top:514.00px;font-size:9.5px;line-height:11.88px;font-weight:400;color:#4f69a3;letter-spacing:-0.18px;white-space:nowrap;">2 Benutzer</div>
<svg class="ic" style="left:1036px;top:513.64px;width:10px;height:10px" viewBox="0 0 16 16"><use href="#lic-mobile"/></svg>
<div class="abs" style="left:1049px;top:514.00px;font-size:9.5px;line-height:11.88px;font-weight:400;color:#2f2f2f;letter-spacing:-0.18px;white-space:nowrap;">Mobile Lager-App</div>
<div class="row" style="top:531.14px;height:21.41px;background:#f8f9f9"></div>
<div class="abs" style="left:0;top:531.14px;width:65px;height:21.41px;background:#fff"></div>
<svg class="ic" style="left:5.8px;top:537.64px;width:10px;height:10px" viewBox="0 0 16 16"><use href="#a-pen"/></svg>
<svg class="ic" style="left:20.5px;top:536.24px;width:11px;height:11px" viewBox="0 0 16 16"><use href="#a-copy"/></svg>
<svg class="ic" style="left:35.4px;top:536.84px;width:10px;height:10px" viewBox="0 0 16 16"><use href="#a-trash"/></svg>
<div class="abs" style="left:68.4px;top:536.00px;font-size:9.5px;line-height:11.88px;font-weight:400;color:#2f2f2f;letter-spacing:-0.18px;white-space:nowrap;">ERP Handel Lagerverwaltung Administrator</div>
<svg class="ic" style="left:455.7px;top:534.9399999999997px;width:9.1px;height:9.1px;color:#787878" viewBox="0 0 16 16"><use href="#i-globe"/></svg>
<svg class="ic" style="left:468.5px;top:534.9399999999997px;width:9.1px;height:9.1px;color:#787878" viewBox="0 0 16 16"><use href="#i-mail"/></svg>
<svg class="ic" style="left:481.3px;top:534.9399999999997px;width:9.1px;height:9.1px;color:#787878" viewBox="0 0 16 16"><use href="#i-users"/></svg>
<svg class="ic" style="left:494.1px;top:534.9399999999997px;width:9.1px;height:9.1px;color:#787878" viewBox="0 0 16 16"><use href="#i-tag"/></svg>
<svg class="ic" style="left:506.9px;top:534.9399999999997px;width:9.1px;height:9.1px;color:#787878" viewBox="0 0 16 16"><use href="#i-box"/></svg>
<svg class="ic" style="left:519.7px;top:534.9399999999997px;width:9.1px;height:9.1px;color:#787878" viewBox="0 0 16 16"><use href="#i-cart"/></svg>
<svg class="ic" style="left:532.5px;top:534.9399999999997px;width:9.1px;height:9.1px;color:#787878" viewBox="0 0 16 16"><use href="#i-warehouse"/></svg>
<svg class="ic" style="left:545.3px;top:534.9399999999997px;width:9.1px;height:9.1px;color:#787878" viewBox="0 0 16 16"><use href="#i-wrench"/></svg>
<svg class="ic" style="left:558.1px;top:534.9399999999997px;width:9.1px;height:9.1px;color:#787878" viewBox="0 0 16 16"><use href="#i-chart"/></svg>
<svg class="ic" style="left:570.9px;top:534.9399999999997px;width:9.1px;height:9.1px;color:#787878" viewBox="0 0 16 16"><use href="#i-gear"/></svg>
<div class="abs" style="left:649.5px;top:536.00px;font-size:9.5px;line-height:11.88px;font-weight:400;color:#4f69a3;letter-spacing:-0.18px;white-space:nowrap;">Katharina</div>
<svg class="ic" style="left:1036px;top:535.04px;width:10px;height:10px" viewBox="0 0 16 16"><use href="#lic-handel"/></svg>
<div class="abs" style="left:1049px;top:536.00px;font-size:9.5px;line-height:11.88px;font-weight:400;color:#2f2f2f;letter-spacing:-0.18px;white-space:nowrap;">ERP Handel</div>
<div class="row" style="top:552.54px;height:21.41px;background:#fff"></div>
<div class="abs" style="left:0;top:552.54px;width:65px;height:21.41px;background:#fff"></div>
<svg class="ic" style="left:5.8px;top:559.04px;width:10px;height:10px" viewBox="0 0 16 16"><use href="#a-pen"/></svg>
<svg class="ic" style="left:20.5px;top:557.64px;width:11px;height:11px" viewBox="0 0 16 16"><use href="#a-copy"/></svg>
<svg class="ic" style="left:35.4px;top:558.24px;width:10px;height:10px" viewBox="0 0 16 16"><use href="#a-trash"/></svg>
<div class="abs" style="left:68.4px;top:557.00px;font-size:9.5px;line-height:11.88px;font-weight:400;color:#2f2f2f;letter-spacing:-0.18px;white-space:nowrap;">Helpdesk Nutzer</div>
<svg class="ic" style="left:455.7px;top:556.3399999999997px;width:9.1px;height:9.1px;color:#787878" viewBox="0 0 16 16"><use href="#i-globe"/></svg>
<svg class="ic" style="left:468.5px;top:556.3399999999997px;width:9.1px;height:9.1px;color:#787878" viewBox="0 0 16 16"><use href="#i-mail"/></svg>
<svg class="ic" style="left:481.3px;top:556.3399999999997px;width:9.1px;height:9.1px;color:#787878" viewBox="0 0 16 16"><use href="#i-users"/></svg>
<svg class="ic" style="left:494.1px;top:556.3399999999997px;width:9.1px;height:9.1px;color:#787878" viewBox="0 0 16 16"><use href="#i-bag"/></svg>
<svg class="ic" style="left:506.9px;top:556.3399999999997px;width:9.1px;height:9.1px;color:#787878" viewBox="0 0 16 16"><use href="#i-tag"/></svg>
<svg class="ic" style="left:519.7px;top:556.3399999999997px;width:9.1px;height:9.1px;color:#787878" viewBox="0 0 16 16"><use href="#i-box"/></svg>
<svg class="ic" style="left:532.5px;top:556.3399999999997px;width:9.1px;height:9.1px;color:#787878" viewBox="0 0 16 16"><use href="#i-bank"/></svg>
<svg class="ic" style="left:545.3px;top:556.3399999999997px;width:9.1px;height:9.1px;color:#787878" viewBox="0 0 16 16"><use href="#i-headset"/></svg>
<svg class="ic" style="left:558.1px;top:556.3399999999997px;width:9.1px;height:9.1px;color:#787878" viewBox="0 0 16 16"><use href="#i-gear"/></svg>
<svg class="ic" style="left:1036px;top:556.44px;width:10px;height:10px" viewBox="0 0 16 16"><use href="#lic-helpdesk"/></svg>
<div class="abs" style="left:1049px;top:557.00px;font-size:9.5px;line-height:11.88px;font-weight:400;color:#2f2f2f;letter-spacing:-0.18px;white-space:nowrap;">Helpdesk</div>
<div class="row" style="top:573.94px;height:21.41px;background:#f8f9f9"></div>
<div class="abs" style="left:0;top:573.94px;width:65px;height:21.41px;background:#fff"></div>
<svg class="ic" style="left:5.8px;top:580.44px;width:10px;height:10px" viewBox="0 0 16 16"><use href="#a-pen"/></svg>
<svg class="ic" style="left:20.5px;top:579.04px;width:11px;height:11px" viewBox="0 0 16 16"><use href="#a-copy"/></svg>
<svg class="ic" style="left:35.4px;top:579.64px;width:10px;height:10px" viewBox="0 0 16 16"><use href="#a-trash"/></svg>
<div class="abs" style="left:68.4px;top:578.00px;font-size:9.5px;line-height:11.88px;font-weight:400;color:#2f2f2f;letter-spacing:-0.18px;white-space:nowrap;">Mein-weclapp-Administrator</div>
<svg class="ic" style="left:455.7px;top:577.7399999999997px;width:9.1px;height:9.1px;color:#787878" viewBox="0 0 16 16"><use href="#i-globe"/></svg>
<svg class="ic" style="left:468.5px;top:577.7399999999997px;width:9.1px;height:9.1px;color:#787878" viewBox="0 0 16 16"><use href="#i-mail"/></svg>
<svg class="ic" style="left:481.3px;top:577.7399999999997px;width:9.1px;height:9.1px;color:#787878" viewBox="0 0 16 16"><use href="#i-store"/></svg>
<svg class="ic" style="left:494.1px;top:577.7399999999997px;width:9.1px;height:9.1px;color:#787878" viewBox="0 0 16 16"><use href="#i-gear"/></svg>
<div class="abs" style="left:649.5px;top:578.00px;font-size:9.5px;line-height:11.88px;font-weight:400;color:#4f69a3;letter-spacing:-0.18px;white-space:nowrap;">2 Benutzer</div>
<div class="row" style="top:595.34px;height:34.25px;background:#fff"></div>
<div class="abs" style="left:0;top:595.34px;width:65px;height:34.25px;background:#fff"></div>
<svg class="ic" style="left:5.8px;top:601.84px;width:10px;height:10px" viewBox="0 0 16 16"><use href="#a-pen"/></svg>
<svg class="ic" style="left:20.5px;top:600.44px;width:11px;height:11px" viewBox="0 0 16 16"><use href="#a-copy"/></svg>
<svg class="ic" style="left:35.4px;top:601.04px;width:10px;height:10px" viewBox="0 0 16 16"><use href="#a-trash"/></svg>
<div class="abs" style="left:68.4px;top:600.00px;font-size:9.5px;line-height:11.88px;font-weight:400;color:#2f2f2f;letter-spacing:-0.18px;white-space:nowrap;">Vertragsmanagement Nutzer</div>
<svg class="ic" style="left:455.7px;top:599.1399999999996px;width:9.1px;height:9.1px;color:#787878" viewBox="0 0 16 16"><use href="#i-globe"/></svg>
<svg class="ic" style="left:468.5px;top:599.1399999999996px;width:9.1px;height:9.1px;color:#787878" viewBox="0 0 16 16"><use href="#i-mail"/></svg>
<svg class="ic" style="left:481.3px;top:599.1399999999996px;width:9.1px;height:9.1px;color:#787878" viewBox="0 0 16 16"><use href="#i-users"/></svg>
<svg class="ic" style="left:494.1px;top:599.1399999999996px;width:9.1px;height:9.1px;color:#787878" viewBox="0 0 16 16"><use href="#i-bag"/></svg>
<svg class="ic" style="left:506.9px;top:599.1399999999996px;width:9.1px;height:9.1px;color:#787878" viewBox="0 0 16 16"><use href="#i-tag"/></svg>
<svg class="ic" style="left:519.7px;top:599.1399999999996px;width:9.1px;height:9.1px;color:#787878" viewBox="0 0 16 16"><use href="#i-box"/></svg>
<svg class="ic" style="left:532.5px;top:599.1399999999996px;width:9.1px;height:9.1px;color:#787878" viewBox="0 0 16 16"><use href="#i-bank"/></svg>
<svg class="ic" style="left:545.3px;top:599.1399999999996px;width:9.1px;height:9.1px;color:#787878" viewBox="0 0 16 16"><use href="#i-doc"/></svg>
<svg class="ic" style="left:558.1px;top:599.1399999999996px;width:9.1px;height:9.1px;color:#787878" viewBox="0 0 16 16"><use href="#i-chart"/></svg>
<svg class="ic" style="left:570.9px;top:599.1399999999996px;width:9.1px;height:9.1px;color:#787878" viewBox="0 0 16 16"><use href="#i-gear"/></svg>
<svg class="ic" style="left:1036px;top:599.24px;width:10px;height:10px" viewBox="0 0 16 16"><use href="#lic-vm"/></svg>
<div class="abs" style="left:1049px;top:600.00px;font-size:9.5px;line-height:11.88px;font-weight:400;color:#2f2f2f;letter-spacing:-0.18px;white-space:nowrap;">Vertragsmanagement</div>
<svg class="ic" style="left:1036px;top:613.64px;width:10px;height:10px" viewBox="0 0 16 16"><use href="#lic-helpdesk"/></svg>
<div class="abs" style="left:1049px;top:614.00px;font-size:9.5px;line-height:11.88px;font-weight:400;color:#2f2f2f;letter-spacing:-0.18px;white-space:nowrap;">Helpdesk</div>
</div>
<div id="border"></div>
</body></html>
